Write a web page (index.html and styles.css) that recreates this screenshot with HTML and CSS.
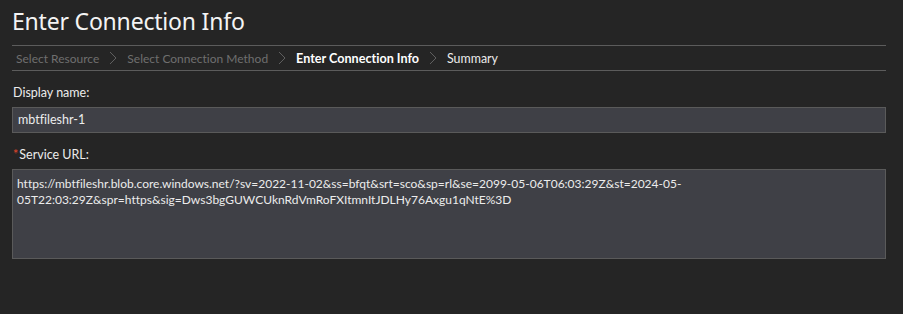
FILE: index.html
```html
<!DOCTYPE html>
<html>
<head>
<meta charset="utf-8">
<link rel="stylesheet" href="styles.css">
</head>
<body>
<div class="page">
  <h1 class="title">Enter Connection Info</h1>
  <nav class="crumbs">
    <span class="crumb done">Select Resource</span>
    <svg class="chev" width="8" height="14" viewBox="0 0 8 14"><path d="M1 1 L7 7 L1 13" fill="none" stroke="#5f5f5f" stroke-width="1"/></svg>
    <span class="crumb done">Select Connection Method</span>
    <svg class="chev" width="8" height="14" viewBox="0 0 8 14"><path d="M1 1 L7 7 L1 13" fill="none" stroke="#5f5f5f" stroke-width="1"/></svg>
    <span class="crumb current">Enter Connection Info</span>
    <svg class="chev" width="8" height="14" viewBox="0 0 8 14"><path d="M1 1 L7 7 L1 13" fill="none" stroke="#5f5f5f" stroke-width="1"/></svg>
    <span class="crumb next">Summary</span>
  </nav>
  <div class="field">
    <label class="label">Display name:</label>
    <div class="input">mbtfileshr-1</div>
  </div>
  <div class="field field-url">
    <label class="label"><span class="req">*</span>Service URL:</label>
    <div class="textarea">https://mbtfileshr.blob.core.windows.net/?sv=2022-11-02&amp;ss=bfqt&amp;srt=sco&amp;sp=rl&amp;se=2099-05-06T06:03:29Z&amp;st=2024-05-05T22:03:29Z&amp;spr=https&amp;sig=Dws3bgGUWCUknRdVmRoFXItmnItJDLHy76Axgu1qNtE%3D</div>
  </div>
</div>
</body>
</html>
```
FILE: styles.css
```css
html, body {
  margin: 0;
  padding: 0;
  background: #252525;
}
body {
  font-family: "Lato", "Noto Sans", sans-serif;
  font-variant-ligatures: none;
  color: #ececec;
}
.page {
  width: 874px;
  padding: 0 17px 0 12px;
}
.title {
  margin: 0;
  font-family: "Noto Sans", sans-serif;
  font-weight: 400;
  font-size: 23px;
  line-height: 30px;
  padding-top: 6px;
  height: 39px;
  color: #f4f4f4;
  letter-spacing: -0.2px;
}
.crumbs {
  border-top: 1px solid #5c5c5c;
  border-bottom: 1px solid #5c5c5c;
  height: 24px;
  display: flex;
  align-items: center;
  padding-left: 4px;
  font-size: 12px;
}
.crumb.done { color: #6f6f6f; }
.crumb.current { color: #ffffff; font-weight: 700; font-size: 12.6px; }
.crumb.next { color: #ececec; font-size: 12.4px; }
.chev { margin: 0 10px 0 10px; }
.field {
  display: flex;
  flex-direction: column;
}
.label {
  font-size: 12.5px;
  height: 18px;
  line-height: 18px;
  margin-top: 13px;
  margin-bottom: 5px;
  padding-left: 1px;
}
.field-url .label { margin-top: 13px; margin-bottom: 5px; }
.req { color: #e0452b; margin-right: 1px; }
.input {
  height: 24px;
  line-height: 24px;
  background: #3f4046;
  border: 1px solid #5a5a5a;
  padding-left: 5px;
  font-size: 12.5px;
}
.textarea {
  height: 78px;
  background: #3f4046;
  border: 1px solid #5a5a5a;
  padding: 6px 5px 4px 4px;
  font-size: 12px;
  line-height: 16px;
}
```
